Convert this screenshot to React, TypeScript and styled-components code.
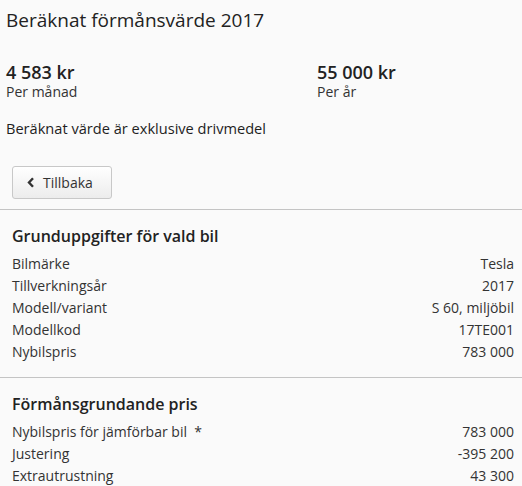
import React from 'react';
import styled, { createGlobalStyle } from 'styled-components';

const GlobalStyle = createGlobalStyle`
  html, body {
    margin: 0;
    padding: 0;
    background: #fafafa;
  }
  body {
    font-family: "Open Sans", "DejaVu Sans", sans-serif;
    color: #333;
  }
`;

const Page = styled.div`
  width: 522px;
  background: #fafafa;
`;

const Top = styled.div`
  padding: 6px 6px 0 6px;
`;

const Title = styled.h1`
  margin: 0;
  font-size: 19px;
  font-weight: 400;
  line-height: 28px;
  color: #222;
`;

const Summary = styled.div`
  display: grid;
  grid-template-columns: 311px 1fr;
  margin-top: 27px;
`;

const Amount = styled.div`
  font-size: 18px;
  font-weight: 600;
  line-height: 22px;
  color: #222;
`;

const AmountLabel = styled.div`
  font-size: 14px;
  line-height: 18px;
  color: #333;
`;

const Note = styled.p`
  margin: 18px 0 0 0;
  font-size: 14.6px;
  font-weight: 400;
  line-height: 18px;
  color: #1e1e1e;
`;

const BackButton = styled.button`
  display: flex;
  align-items: center;
  gap: 8px;
  margin: 29px 0 10px 6px;
  height: 33px;
  width: 100px;
  padding: 0 14px;
  font-family: inherit;
  font-size: 14px;
  color: #333;
  border: 1px solid #c8c8c8;
  border-radius: 3px;
  background: linear-gradient(#ffffff, #ececec);
  cursor: pointer;
`;

const Divider = styled.hr`
  margin: 0;
  border: none;
  border-top: 1px solid #c4c4c4;
`;

const Section = styled.section`
  padding: 15px 8px 14px 12px;
`;

const SectionTitle = styled.h2`
  margin: 0 0 6px 0;
  font-size: 16px;
  font-weight: 600;
  line-height: 22px;
  color: #222;
`;

const Row = styled.div`
  display: flex;
  justify-content: space-between;
  font-size: 14px;
  line-height: 22px;
  color: #333;
`;

const Label = styled.span`
  white-space: pre;
`;

type Item = [string, string];

const basics: Item[] = [
  ['Bilmärke', 'Tesla'],
  ['Tillverkningsår', '2017'],
  ['Modell/variant', 'S 60, miljöbil'],
  ['Modellkod', '17TE001'],
  ['Nybilspris', '783 000'],
];

const pricing: Item[] = [
  ['Nybilspris för jämförbar bil  *', '783 000'],
  ['Justering', '-395 200'],
  ['Extrautrustning', '43 300'],
];

function Chevron() {
  return (
    <svg width="8" height="11" viewBox="0 0 8 11">
      <path d="M6 1.2 L2 5.5 L6 9.8" fill="none" stroke="#333" strokeWidth="2.4" />
    </svg>
  );
}

export default function App() {
  return (
    <Page>
      <GlobalStyle />
      <Top>
        <Title>Beräknat förmånsvärde 2017</Title>
        <Summary>
          <div>
            <Amount>4 583 kr</Amount>
            <AmountLabel>Per månad</AmountLabel>
          </div>
          <div>
            <Amount>55 000 kr</Amount>
            <AmountLabel>Per år</AmountLabel>
          </div>
        </Summary>
        <Note>Beräknat värde är exklusive drivmedel</Note>
        <BackButton>
          <Chevron />
          Tillbaka
        </BackButton>
      </Top>
      <Divider />
      <Section>
        <SectionTitle>Grunduppgifter för vald bil</SectionTitle>
        {basics.map(([k, v]) => (
          <Row key={k}>
            <Label>{k}</Label>
            <span>{v}</span>
          </Row>
        ))}
      </Section>
      <Divider />
      <Section>
        <SectionTitle>Förmånsgrundande pris</SectionTitle>
        {pricing.map(([k, v]) => (
          <Row key={k}>
            <Label>{k}</Label>
            <span>{v}</span>
          </Row>
        ))}
      </Section>
    </Page>
  );
}
